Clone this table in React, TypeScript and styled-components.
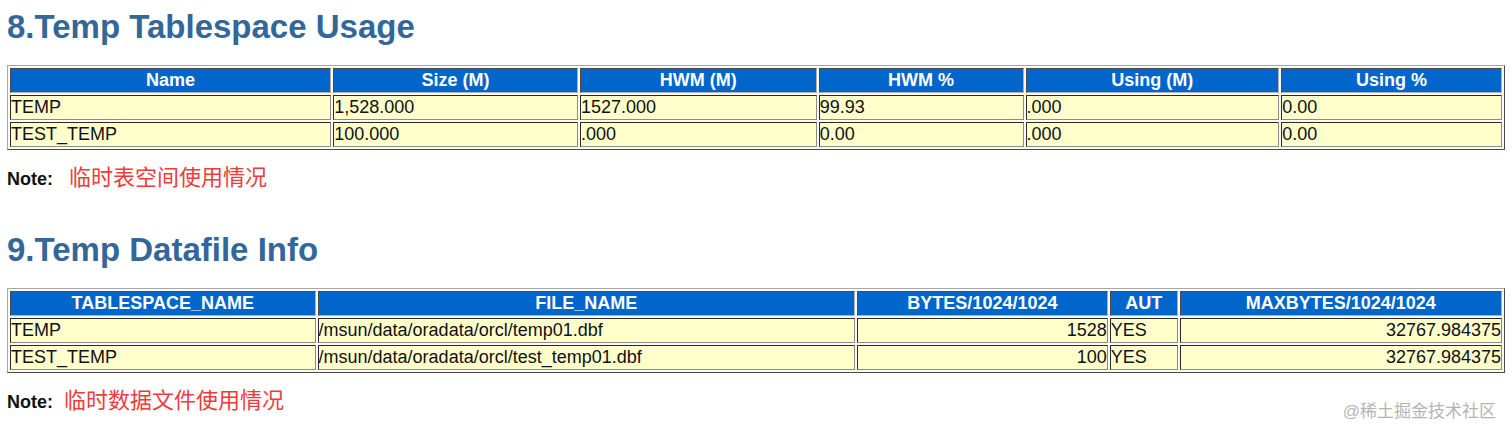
import styled, { createGlobalStyle } from "styled-components"

const GlobalStyle = createGlobalStyle`
  html, body {
    margin: 0;
    padding: 0;
    background: #fff;
  }
  body {
    font-family: "Liberation Sans", Arial, "Noto Sans CJK SC", sans-serif;
  }
`

interface IColumn {
  title: string
  width: number
  align?: "left" | "right"
}

interface ISection {
  title: string
  columns: IColumn[]
  rows: string[][]
  note: string
  noteGap: number
}

const sections: ISection[] = [
  {
    title: "8.Temp Tablespace Usage",
    columns: [
      { title: "Name", width: 323 },
      { title: "Size (M)", width: 246 },
      { title: "HWM (M)", width: 238 },
      { title: "HWM %", width: 206 },
      { title: "Using (M)", width: 255 },
      { title: "Using %", width: 222 },
    ],
    rows: [
      ["TEMP", "1,528.000", "1527.000", "99.93", ".000", "0.00"],
      ["TEST_TEMP", "100.000", ".000", "0.00", ".000", "0.00"],
    ],
    note: "临时表空间使用情况",
    noteGap: 16,
  },
  {
    title: "9.Temp Datafile Info",
    columns: [
      { title: "TABLESPACE_NAME", width: 307 },
      { title: "FILE_NAME", width: 540 },
      { title: "BYTES/1024/1024", width: 252, align: "right" },
      { title: "AUT", width: 68 },
      { title: "MAXBYTES/1024/1024", width: 324, align: "right" },
    ],
    rows: [
      ["TEMP", "/msun/data/oradata/orcl/temp01.dbf", "1528", "YES", "32767.984375"],
      ["TEST_TEMP", "/msun/data/oradata/orcl/test_temp01.dbf", "100", "YES", "32767.984375"],
    ],
    note: "临时数据文件使用情况",
    noteGap: 11,
  },
]

const Page = styled.div`
  position: relative;
  padding: 8px 7px 0;
  min-height: 427px;
`

const Section = styled.section`
  & + & {
    margin-top: 43px;
  }
`

const Heading = styled.h2`
  margin: 0;
  font-size: 33px;
  line-height: 38px;
  font-weight: 700;
  color: #336699;
`

const ReportTable = styled.table`
  box-sizing: border-box;
  width: 100%;
  margin-top: 19px;
  table-layout: fixed;
  border-collapse: separate;
  border-spacing: 2px;
  border: 1px solid;
  border-color: #a8a8a8 #4a4a4a #4a4a4a #a8a8a8;
  background: #fbfbf3;
  font-size: 18px;
`

const HeadCell = styled.th`
  padding: 1px;
  line-height: 21px;
  background: #0066cc;
  color: #fff;
  font-weight: 700;
  text-align: center;
  white-space: nowrap;
  overflow: hidden;
  border: 1px solid;
  border-color: #4a4a4a #b0b0b0 #b0b0b0 #4a4a4a;
`

const Cell = styled.td<{ $align?: "left" | "right" }>`
  padding: 1px 0;
  line-height: 21px;
  background: #ffffcc;
  color: #111;
  text-align: ${p => p.$align || "left"};
  white-space: nowrap;
  overflow: hidden;
  border: 1px solid;
  border-color: #2a2a2a #8a8a8a #8a8a8a #2a2a2a;
`

const NoteRow = styled.div<{ $gap: number }>`
  display: flex;
  align-items: baseline;
  gap: ${p => p.$gap}px;
  margin-top: 12px;
  height: 26px;
`

const NoteLabel = styled.b`
  font-size: 18px;
  color: #111;
`

const NoteText = styled.span`
  font-family: "Noto Sans CJK SC", "Liberation Sans", sans-serif;
  font-size: 22px;
  line-height: 26px;
  color: #ee3b3b;
`

const Watermark = styled.div`
  position: absolute;
  right: 16px;
  top: 397px;
  font-family: "Liberation Sans", "Noto Sans CJK SC", sans-serif;
  font-size: 17px;
  color: #b4b4b4;
`

const App = () => {
  return (
    <>
      <GlobalStyle />
      <Page>
        {sections.map(section => {
          const total = section.columns.reduce((sum, col) => sum + col.width, 0)
          return (
            <Section key={section.title}>
              <Heading>{section.title}</Heading>
              <ReportTable>
                <colgroup>
                  {section.columns.map(col => (
                    <col
                      key={col.title}
                      style={{ width: `${(col.width / total) * 100}%` }}
                    />
                  ))}
                </colgroup>
                <thead>
                  <tr>
                    {section.columns.map(col => (
                      <HeadCell key={col.title}>{col.title}</HeadCell>
                    ))}
                  </tr>
                </thead>
                <tbody>
                  {section.rows.map(row => (
                    <tr key={row[0]}>
                      {row.map((value, i) => (
                        <Cell key={i} $align={section.columns[i].align}>
                          {value}
                        </Cell>
                      ))}
                    </tr>
                  ))}
                </tbody>
              </ReportTable>
              <NoteRow $gap={section.noteGap}>
                <NoteLabel>Note:</NoteLabel>
                <NoteText>{section.note}</NoteText>
              </NoteRow>
            </Section>
          )
        })}
        <Watermark>@稀土掘金技术社区</Watermark>
      </Page>
    </>
  )
}

export default App
